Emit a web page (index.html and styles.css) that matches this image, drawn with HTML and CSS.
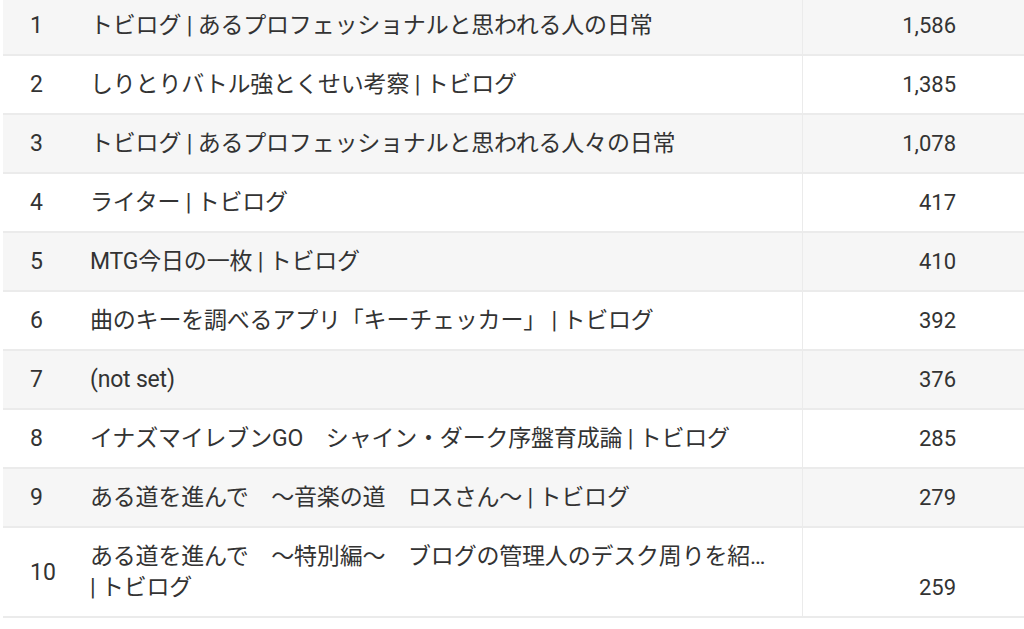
FILE: index.html
```html
<!DOCTYPE html>
<html lang="ja">
<head>
  <meta charset="UTF-8">
  <meta name="viewport" content="width=device-width, initial-scale=1.0">
  <title>ページタイトル別 表示回数</title>
  <link rel="stylesheet" href="styles.css">
</head>
<body>
  <table class="report">
    <tbody>
      <tr class="odd">
        <td class="rank">1</td>
        <td class="title">トビログ | あるプロフェッショナルと思われる人の日常</td>
        <td class="value">1,586</td>
      </tr>
      <tr>
        <td class="rank">2</td>
        <td class="title">しりとりバトル強とくせい考察 | トビログ</td>
        <td class="value">1,385</td>
      </tr>
      <tr class="odd">
        <td class="rank">3</td>
        <td class="title">トビログ | あるプロフェッショナルと思われる人々の日常</td>
        <td class="value">1,078</td>
      </tr>
      <tr>
        <td class="rank">4</td>
        <td class="title">ライター | トビログ</td>
        <td class="value">417</td>
      </tr>
      <tr class="odd">
        <td class="rank">5</td>
        <td class="title">MTG今日の一枚 | トビログ</td>
        <td class="value">410</td>
      </tr>
      <tr>
        <td class="rank">6</td>
        <td class="title">曲のキーを調べるアプリ「キーチェッカー」 | トビログ</td>
        <td class="value">392</td>
      </tr>
      <tr class="odd">
        <td class="rank">7</td>
        <td class="title">(not set)</td>
        <td class="value">376</td>
      </tr>
      <tr>
        <td class="rank">8</td>
        <td class="title">イナズマイレブンGO　シャイン・ダーク序盤育成論 | トビログ</td>
        <td class="value">285</td>
      </tr>
      <tr class="odd">
        <td class="rank">9</td>
        <td class="title">ある道を進んで　～音楽の道　ロスさん～ | トビログ</td>
        <td class="value">279</td>
      </tr>
      <tr>
        <td class="rank">10</td>
        <td class="title">ある道を進んで　～特別編～　ブログの管理人のデスク周りを紹…<br>| トビログ</td>
        <td class="value">259</td>
      </tr>
    </tbody>
  </table>
</body>
</html>
```

FILE: styles.css
```css
:root {
  --text: #333;
  --row-alt: #f6f6f6;
  --line: #ebebeb;
}

* {
  box-sizing: border-box;
  margin: 0;
  padding: 0;
}

body {
  background: #fff;
  color: var(--text);
  font-family: Roboto, "Noto Sans CJK JP", sans-serif;
  font-size: 23px;
  line-height: 31px;
  padding-left: 3px;
  overflow: hidden;
}

.report {
  width: 1021px;
  border-collapse: separate;
  border-spacing: 0;
  table-layout: fixed;
  margin-top: -3px;
}

.report tr.odd td {
  background: var(--row-alt);
}

.report td {
  padding: 13px 0;
  border-bottom: 2px solid var(--line);
  vertical-align: middle;
}

.report .rank {
  width: 87px;
  padding-left: 27px;
}

.report .title {
  width: 712px;
  letter-spacing: -0.2px;
}

.report .value {
  text-align: right;
  vertical-align: bottom;
  padding-right: 68px;
  font-size: 22px;
  border-left: 1px solid var(--line);
}
```
